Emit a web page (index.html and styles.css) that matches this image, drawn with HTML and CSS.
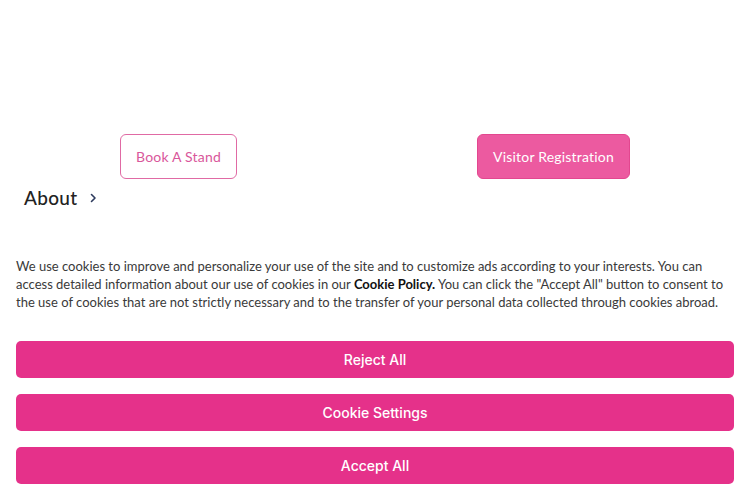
FILE: index.html
```html
<!DOCTYPE html>
<html lang="en">
<head>
    <meta charset="UTF-8">
    <meta name="viewport" content="width=device-width, initial-scale=1.0">
    <title>Expo</title>
    <link rel="stylesheet" href="styles.css">
</head>
<body>
    <div class="hero"></div>

    <div class="cta-row">
        <div class="cta-col">
            <a href="#" class="btn btn-outline">Book A Stand</a>
        </div>
        <div class="cta-col">
            <a href="#" class="btn btn-solid">Visitor Registration</a>
        </div>
    </div>

    <div class="section-link">
        <span>About</span>
        <svg class="chevron" width="10" height="10" viewBox="0 0 10 10" aria-hidden="true">
            <path d="M3.5 1.5 L7 5 L3.5 8.5" fill="none" stroke="#2d3b5e" stroke-width="1.6" stroke-linecap="round" stroke-linejoin="round"/>
        </svg>
    </div>

    <div class="cookie-banner">
        <p class="cookie-text">
            We use cookies to improve and personalize your use of the site and to customize ads according to your interests. You can<br>
            access detailed information about our use of cookies in our <b>Cookie Policy.</b> You can click the "Accept All" button to consent to<br>
            the use of cookies that are not strictly necessary and to the transfer of your personal data collected through cookies abroad.
        </p>
        <div class="cookie-actions">
            <button class="cookie-btn">Reject All</button>
            <button class="cookie-btn">Cookie Settings</button>
            <button class="cookie-btn">Accept All</button>
        </div>
    </div>
</body>
</html>
```

FILE: styles.css
```css
:root {
    --pink: #e5318a;
    --pink-soft: #ec5aa0;
    --pink-line: #e06aa4;
    --text-dark: #222222;
    --text-body: #3a3a3a;
}

body {
    margin: 0;
    font-family: "Lato", "Noto Sans", sans-serif;
    background: #ffffff;
    color: var(--text-dark);
}

.hero {
    height: 134px;
}

.cta-row {
    display: flex;
}

.cta-col {
    flex: 1;
    display: flex;
    justify-content: center;
    padding-right: 18px;
}

.btn {
    display: inline-flex;
    align-items: center;
    height: 45px;
    box-sizing: border-box;
    padding: 0 15px;
    border-radius: 6px;
    font-size: 14px;
    text-decoration: none;
    letter-spacing: 0.2px;
}

.btn-outline {
    border: 1px solid var(--pink-line);
    color: #d9579b;
    background: #ffffff;
}

.btn-solid {
    border: 1px solid #e3478f;
    background: var(--pink-soft);
    color: #ffffff;
}

.section-link {
    display: flex;
    align-items: center;
    gap: 11px;
    padding: 7px 24px 0;
    font-size: 19px;
    font-weight: 500;
    letter-spacing: 0.3px;
    color: var(--text-dark);
}

.chevron {
    margin-top: 1px;
}

.cookie-banner {
    padding: 48px 16px 16px;
}

.cookie-text {
    margin: 0;
    font-size: 13px;
    line-height: 18px;
    color: var(--text-body);
    white-space: nowrap;
}

.cookie-text b {
    color: #111111;
}

.cookie-actions {
    display: flex;
    flex-direction: column;
    gap: 16px;
    margin-top: 30px;
}

.cookie-btn {
    height: 37px;
    border: none;
    border-radius: 5px;
    background: var(--pink);
    color: #ffffff;
    font-family: "Inter", "Lato", sans-serif;
    font-size: 14px;
    font-weight: 500;
    cursor: pointer;
}
```
